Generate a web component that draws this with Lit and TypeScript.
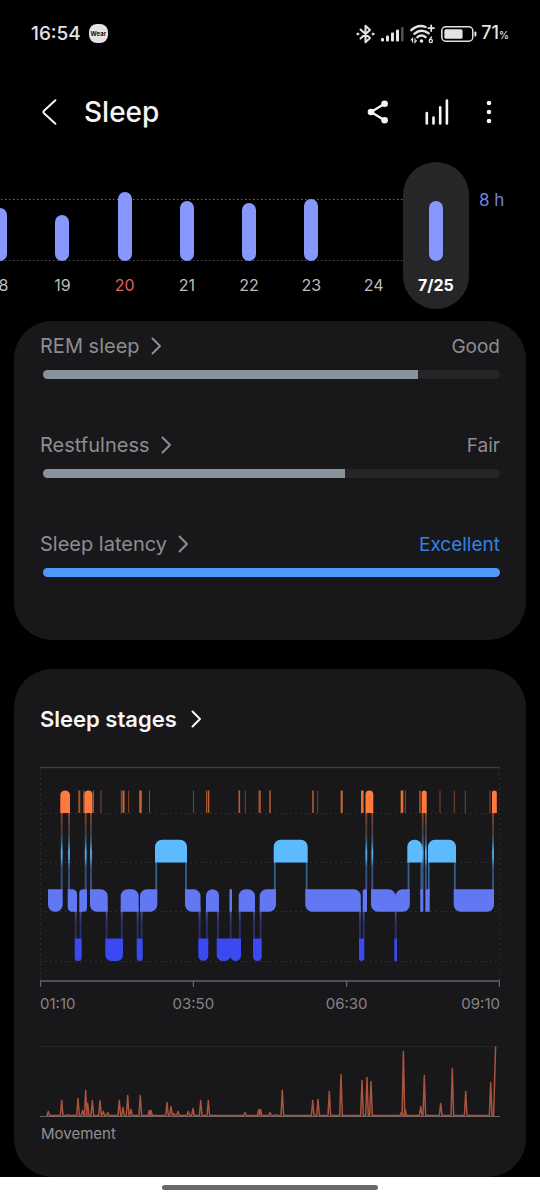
import { LitElement, html, svg, css } from "lit";
import { customElement, property } from "lit/decorators.js";
import { classMap } from "lit/directives/class-map.js";
import { styleMap } from "lit/directives/style-map.js";

const reset = css`
  *, *::before, *::after { box-sizing: border-box; }
  button { font: inherit; color: inherit; background: none; border: 0; padding: 0; margin: 0; cursor: pointer; }
  a { color: inherit; text-decoration: none; }
  svg { display: block; overflow: visible; }
`;

const chevron = svg`<path d="M1.5 1.5 L9 9 L1.5 16.5" fill="none" stroke="currentColor" stroke-width="2" stroke-linecap="round" stroke-linejoin="round"/>`;

@customElement("status-bar")
class StatusBar extends LitElement {
  static styles = [reset, css`
    :host { display: flex; align-items: center; height: 67px; padding: 0 31px; color: #e4e2e4; }
    .time { font-size: 19px; font-weight: 500; line-height: 24px; }
    .wear { display: grid; place-items: center; width: 19px; height: 19px; margin-left: 8px; border-radius: 8px; background: #e4e2e4; color: #111; font-size: 6px; font-weight: 700; line-height: 8px; }
    .icons { display: flex; align-items: center; gap: 6px; margin-left: auto; }
    .level { font-size: 18px; font-weight: 500; line-height: 24px; margin-left: -2px; }
    .percent { font-size: 10px; }
  `];
  render() {
    return html`
      <span class="time">16:54</span><span class="wear">Wear</span>
      <div class="icons">
        <svg width="19" height="20" viewBox="0 0 19 20" fill="none" stroke="currentColor" stroke-width="2" stroke-linejoin="round" stroke-linecap="round">
          <path d="M4.5 5.5 L14 14 L9.5 18.3 V1.7 L14 6 L4.5 14.5"/>
          <circle cx="1.8" cy="10" r="1" fill="currentColor" stroke-width="1"/><circle cx="17" cy="10" r="1" fill="currentColor" stroke-width="1"/>
        </svg>
        <svg width="23" height="16" viewBox="0 0 23 16" fill="currentColor">
          <rect x="0" y="12" width="3" height="3.5" rx="1"/><rect x="5" y="9.5" width="3" height="6" rx="1"/>
          <rect x="10" y="6.5" width="3" height="9" rx="1"/><rect x="15" y="3.5" width="3" height="12" rx="1"/>
          <rect x="20" y="1" width="2.6" height="14.5" rx="1" opacity=".35"/>
        </svg>
        <svg width="25" height="20" viewBox="0 0 25 20" fill="none" stroke="currentColor" stroke-width="2.4" stroke-linecap="round">
          <path d="M1.3 6.2 Q8 -.2 15.6 3"/><path d="M4.3 9.8 Q11 4 18.6 9.2"/><path d="M7.4 13.2 Q11.5 9.8 15.6 13.2"/>
          <circle cx="11.5" cy="17" r="1.8" fill="currentColor" stroke="none"/>
          <path d="M21.2 1.4 V7 M18.4 4.2 H24" stroke-width="1.8"/>
          <path d="M2.6 18.2 V14.4 L1 16.2 M5 14.6 V18.4 L6.4 16.6" stroke-width="1.1"/>
          <path d="M21.6 13 L19.4 16" stroke-width="1.3"/><circle cx="20.8" cy="17" r="1.6" stroke-width="1.3"/>
        </svg>
        <svg width="36" height="16" viewBox="0 0 36 16" fill="currentColor">
          <rect x=".8" y=".8" width="31" height="14.4" rx="4" fill="none" stroke="currentColor" stroke-width="1.5"/>
          <rect x="3.4" y="3.2" width="18.2" height="9.6" rx="1.6"/><rect x="33.4" y="5.4" width="2" height="5" rx="1"/>
        </svg>
        <span class="level">71<span class="percent">%</span></span>
      </div>`;
  }
}

@customElement("page-header")
class PageHeader extends LitElement {
  static styles = [reset, css`
    :host { display: flex; align-items: center; height: 90px; padding: 0 41px 0 35px; color: #f6f4f6; }
    .title { margin: 0 0 0 21px; font-size: 28px; font-weight: 500; line-height: 36px; }
    .actions { display: flex; align-items: center; gap: 28px; margin-left: auto; }
    .icon { display: grid; place-items: center; width: 28px; height: 32px; }
    .share { width: 34px; }
    .more { width: 20px; }
  `];
  render() {
    return html`
      <button class="icon" aria-label="Back">
        <svg width="16" height="26" viewBox="0 0 16 26"><path d="M14.4 1.2 L3 11.8 Q1.8 13 3 14.2 L14.4 24.8" fill="none" stroke="currentColor" stroke-width="2" stroke-linecap="round"/></svg>
      </button>
      <h1 class="title">Sleep</h1>
      <div class="actions">
        <button class="icon share" aria-label="Share">
          <svg width="22" height="24" viewBox="0 0 22 24" fill="currentColor">
            <path d="M18 3.5 L4 12 L18 20.5" fill="none" stroke="currentColor" stroke-width="2.2"/>
            <circle cx="4" cy="12" r="3.3"/><circle cx="17.6" cy="3.8" r="3.3"/><circle cx="17.6" cy="20.2" r="3.3"/>
          </svg>
        </button>
        <button class="icon" aria-label="Statistics">
          <svg width="24" height="26" viewBox="0 0 24 26" fill="none" stroke="currentColor" stroke-width="2.6" stroke-linecap="round">
            <path d="M1.8 14 V24.4 M8.5 18.6 V24.4 M15.2 8.4 V24.4 M21.9 1.6 V24.4"/>
          </svg>
        </button>
        <button class="icon more" aria-label="More options">
          <svg width="6" height="24" viewBox="0 0 6 24" fill="currentColor"><circle cx="3" cy="3" r="2.3"/><circle cx="3" cy="12" r="2.3"/><circle cx="3" cy="21" r="2.3"/></svg>
        </button>
      </div>`;
  }
}

const days = [
  { label: "18", height: 53 }, { label: "19", height: 46 }, { label: "20", height: 69, holiday: true },
  { label: "21", height: 60 }, { label: "22", height: 58 }, { label: "23", height: 62 },
  { label: "24", height: 0 }, { label: "7/25", height: 60, selected: true },
];

@customElement("day-strip")
class DayStrip extends LitElement {
  static styles = [reset, css`
    :host { display: flex; padding-top: 5px; overflow: hidden; }
    .days {
      flex: 1; display: grid; grid-template-columns: repeat(8, minmax(0, 1fr)); margin-left: -31px;
      background:
        linear-gradient(90deg, #7272b4 1px, #26263c 1px, #26263c 2px, transparent 2px) 0 37px / 4px 1px repeat-x,
        linear-gradient(90deg, #5a5a5e 1px, #1e1e20 1px, #1e1e20 2px, transparent 2px) 0 98px / 4px 1px repeat-x;
    }
    .day { display: flex; flex-direction: column; align-items: center; height: 147px; color: #bdbbbd; }
    .holiday { color: #e2605e; }
    .selected { margin: 0 -2px; border-radius: 33px; background: #262527; color: #fff; font-weight: 700; }
    .slot { display: flex; align-items: flex-end; height: 99px; margin-bottom: 12px; }
    .bar { width: 14px; border-radius: 7px; background: #8697fd; }
    .label { font-size: 16px; line-height: 24px; }
    .goal { width: 73px; padding: 26px 0 0 12px; color: #7583dc; font-size: 17px; line-height: 24px; }
  `];
  render() {
    return html`
      <div class="days">
        ${days.map((d) => html`
          <button class=${classMap({ day: true, holiday: !!d.holiday, selected: !!d.selected })}>
            <span class="slot"><span class="bar" style=${styleMap({ height: `${d.height}px` })}></span></span>
            <span class="label">${d.label}</span>
          </button>`)}
      </div>
      <span class="goal">8 h</span>`;
  }
}

@customElement("score-row")
class ScoreRow extends LitElement {
  @property() label = "";
  @property() rating = "";
  @property({ type: Number }) value = 0;
  @property({ type: Boolean }) best = false;
  static styles = [reset, css`
    :host { display: flex; flex-direction: column; gap: 10px; color: #8f8d91; }
    .head { display: flex; align-items: baseline; justify-content: space-between; height: 28px; font-size: 20px; line-height: 28px; }
    .name { display: flex; align-items: center; gap: 11px; }
    .rating { font-size: 19px; }
    .track { height: 9px; margin-left: 3px; border-radius: 5px; background: #252427; overflow: hidden; }
    .fill { height: 100%; background: #89939b; }
    .best .rating { color: #3282e2; }
    .fill.full { background: #4c99fc; }
  `];
  render() {
    return html`
      <div class=${classMap({ head: true, best: this.best })}>
        <a class="name" href="#">${this.label}<svg width="11" height="18" viewBox="0 0 11 18">${chevron}</svg></a>
        <span class="rating">${this.rating}</span>
      </div>
      <div class="track"><div class=${classMap({ fill: true, full: this.best })} style=${styleMap({ width: `${this.value}%` })}></div></div>`;
  }
}

type Seg = [number, number, string];
/* Each segment: start, end and which corners are rounded (tl, tr, br, bl). */
const light: Seg[] = [
  [8, 22.7, "0011"], [27.7, 37, "0101"], [39.3, 47, "1010"], [50, 67.7, "0101"], [80.7, 98.7, "1100"],
  [100, 117.3, "1010"], [145, 160.5, "0101"], [166, 179, "1100"], [189.5, 192, "0000"], [198.7, 215, "1100"],
  [219.7, 236, "1010"], [265.3, 320.8, "0101"], [322.7, 327, "1000"], [331, 355.5, "0101"], [355.5, 369.8, "1010"],
  [380.3, 383.3, "0000"], [385.3, 389.7, "0000"], [413.7, 454, "0011"],
];
const rem: Seg[] = [[115, 147, "1100"], [233.7, 267.7, "1100"], [367.3, 382, "1100"], [388, 416, "1100"]];
const deep: Seg[] = [
  [34.7, 41.7, "0011"], [65.3, 83, "0011"], [96.7, 102.7, "0011"], [158.3, 168.3, "0011"], [176.7, 190.8, "0011"],
  [190.2, 201, "0011"], [213, 221.7, "0011"], [319, 324.3, "0011"], [354.3, 357, "0000"],
];
const awake: Seg[] = [[20.3, 30, "1100"], [44.3, 52.5, "1100"], [325.5, 333.3, "1100"], [381.7, 386.7, "1100"], [452, 456.8, "1100"]];
/* Short wake-ups: position, width, opacity. */
const wakes: [number, number, number][] = [
  [39.3, 2, .6], [43.7, 1, .6], [53.5, 1, .6], [61, 1, .5], [81.3, 1, .6], [83.5, 2, .8], [88.7, 1, .5], [100.5, 2.4, .8],
  [109.5, 1, .5], [153.5, 1, .45], [166.7, 1.2, .7], [168.7, 1.2, .8], [199.3, 1.6, .7], [205.3, 1, .45], [219.7, 2.4, .6],
  [230, 1.6, .65], [273, 1.8, .6], [277.7, 1, .4], [301.7, 2, .8], [322.3, 2.6, .9], [362, 2.6, .9], [365.3, 1, .5],
  [380, 1.4, .7], [400, 1.2, .4], [414.3, 1, .45], [425.3, 1, .45], [450, 1.6, .35],
];
const awakeLinks = [21.7, 29, 45.7, 51, 326.3, 332.3, 382.7, 385.9, 453];
const remLinks = [116.2, 146, 234.8, 266.6, 368.5, 381.4, 388.8, 414.8];
const deepLinks = [35.7, 40.5, 66.6, 81.8, 97.6, 101.6, 159.6, 166.8, 178, 190.7, 199.8, 214, 220.6, 320, 323.7, 355.7];

const segment = ([a, b, c]: Seg, y: number, h: number, max: number) => {
  const r = Math.min(max, (b - a) / 2);
  const [tl, tr, br, bl] = [...c].map((f) => (f === "1" ? r : 0));
  const arc = (n: number, x: number, ey: number) => (n ? `A${n} ${n} 0 0 1 ${x} ${ey}` : "");
  return `M${a + tl} ${y}H${b - tr}${arc(tr, b, y + tr)}V${y + h - br}${arc(br, b - br, y + h)}H${a + bl}${arc(bl, a, y + h - bl)}V${y + tl}${arc(tl, a + tl, y)}Z`;
};
const layer = (list: Seg[], y: number, color: string, max = 7) =>
  svg`<path d=${list.map((s) => segment(s, y, 22.6, max)).join("")} fill=${color}/>`;
const links = (xs: number[], y: number, h: number, fill: string) =>
  xs.map((x) => svg`<rect x=${x - 0.9} y=${y} width="1.8" height=${h} fill=${fill}/>`);

/* Movement spikes: position and height. */
const spikes: [number, number][] = [
  [8.3, 4], [21.7, 15], [28.7, 1], [38, 17], [42.7, 5], [45.7, 25], [47.7, 12], [52.3, 15], [60, 15], [63.3, 4], [67.7, 3],
  [79.3, 15], [83, 8], [87.7, 20], [91, 6], [100.3, 20], [109.3, 5], [111, 5], [127, 13], [131, 9], [133.7, 2], [138, 4],
  [148.3, 4], [153, 7], [160.7, 15], [168.3, 15], [205, 3], [218.7, 6], [220.5, 6], [230, 3], [236.7, 1], [242.3, 25],
  [272.7, 15], [278, 16], [289.3, 24], [301, 41], [322, 35], [327, 38], [331, 34], [361.3, 3], [363.4, 64], [365.2, 6],
  [380.7, 9], [384.3, 40], [400.7, 12], [412.3, 47], [425.7, 24], [450.7, 33],
];

@customElement("stages-chart")
class StagesChart extends LitElement {
  static styles = [reset, css`
    :host { display: block; color: #858387; }
    .plot { width: 100%; height: auto; }
    .axis { display: grid; grid-template-columns: 1fr 2fr 2fr 1fr; margin: 5px 0 31px; font-size: 15px; line-height: 22px; text-align: center; }
    .first { text-align: left; }
    .last { text-align: right; }
    .caption { margin: 6px 0 0 1px; font-size: 15px; line-height: 22px; color: #929094; }
  `];
  render() {
    const moves = spikes.map(([x, h]) => `L${x - 1.3} 69.5L${x} ${69.5 - h}L${x + 1.3} 69.5`).join("");
    return html`
      <svg class="plot" viewBox="0 0 460 222" role="img" aria-label="Sleep stages from 01:10 to 09:10">
        <defs>
          <linearGradient id="wake" x1="0" y1="0" x2="0" y2="1">
            <stop offset="0" stop-color="#ff7a3c" stop-opacity=".5"/><stop offset=".25" stop-color="#7d6a78" stop-opacity=".45"/>
            <stop offset=".4" stop-color="#3f8fc4" stop-opacity=".7"/><stop offset=".5" stop-color="#5cbaff" stop-opacity=".95"/><stop offset=".6" stop-color="#5cbaff" stop-opacity=".85"/>
            <stop offset=".72" stop-color="#3f7ab8" stop-opacity=".6"/><stop offset="1" stop-color="#5a7cf0" stop-opacity=".6"/>
          </linearGradient>
          <linearGradient id="sink" x1="0" y1="0" x2="0" y2="1">
            <stop offset="0" stop-color="#6278f2" stop-opacity=".7"/><stop offset=".6" stop-color="#4a56c8" stop-opacity=".4"/><stop offset="1" stop-color="#3a49f0" stop-opacity=".5"/>
          </linearGradient>
        </defs>
        <path d="M0 1.5H460" stroke="#3c3b3e" stroke-width="1.4"/>
        <path d="M0 47.5H460M0 96.5H460M0 145.5H460M0 195.5H460M.5 2V215M459.5 2V215" stroke="#2c2b2e" stroke-dasharray="2 3" fill="none"/>
        <path d="M0 215H460M.6 215V221M153.4 215V221M306.6 215V221M459.4 215V221" stroke="#626165" stroke-width="1.3" fill="none"/>
        ${links(awakeLinks, 47, 76.4, "url(#wake)")}
        ${links(remLinks, 96, 36, "#34628f")}
        ${links(deepLinks, 140, 32.6, "url(#sink)")}
        ${wakes.map(([x, w, o]) => svg`<rect x=${x - w / 2} y="24.5" width=${w} height="22.4" fill="#ff7a3c" opacity=${o}/>`)}
        ${layer(awake, 24.4, "#ff7a3c", 5)}
        ${layer(rem, 73.8, "#5cbaff")}
        ${layer(light, 123.2, "#6278f2")}
        ${layer(deep, 172.4, "#3a49f0", 6)}
      </svg>
      <div class="axis"><span class="first">01:10</span><span>03:50</span><span>06:30</span><span class="last">09:10</span></div>
      <svg class="plot" viewBox="0 0 460 71" role="img" aria-label="Movement">
        <path d="M0 .5H460" stroke="#252427"/>
        <path d="M0 70.5H460" stroke="#6b6769" stroke-width="1.2"/>
        <path d=${`M8 69.5${moves}L453.6 69.5L455.6 .5`} fill="none" stroke="#a8543e" stroke-width="1.5" stroke-linejoin="round"/>
      </svg>
      <p class="caption">Movement</p>`;
  }
}

@customElement("app-root")
class AppRoot extends LitElement {
  static styles = [reset, css`
    :host { display: flex; flex-direction: column; min-height: 100vh; background: #000; font-family: Inter, Roboto, sans-serif; overflow: hidden; }
    .card { margin: 0 14px; padding: 0 26px; border-radius: 38px; background: #18171a; }
    .scores { display: flex; flex-direction: column; gap: 52px; margin-top: 12px; padding-top: 11px; padding-bottom: 63px; }
    .stages { margin-top: 29px; padding-top: 36px; padding-bottom: 32px; }
    .heading { display: flex; margin: 0 0 33px; font-size: 22px; font-weight: 600; line-height: 28px; color: #f8f6f8; }
    .link { display: flex; align-items: center; gap: 14px; }
    .nav { display: grid; place-items: center; flex: 1; min-height: 23px; background: #fff; }
    .pill { width: 40%; height: 5px; margin-bottom: 2px; border-radius: 3px; background: #6a696a; }
  `];
  render() {
    return html`
      <status-bar></status-bar>
      <page-header></page-header>
      <day-strip></day-strip>
      <section class="card scores">
        <score-row label="REM sleep" rating="Good" value="82"></score-row>
        <score-row label="Restfulness" rating="Fair" value="66"></score-row>
        <score-row label="Sleep latency" rating="Excellent" value="100" best></score-row>
      </section>
      <section class="card stages">
        <h2 class="heading"><a class="link" href="#">Sleep stages<svg width="11" height="18" viewBox="0 0 11 18">${chevron}</svg></a></h2>
        <stages-chart></stages-chart>
      </section>
      <div class="nav"><div class="pill"></div></div>`;
  }
}
